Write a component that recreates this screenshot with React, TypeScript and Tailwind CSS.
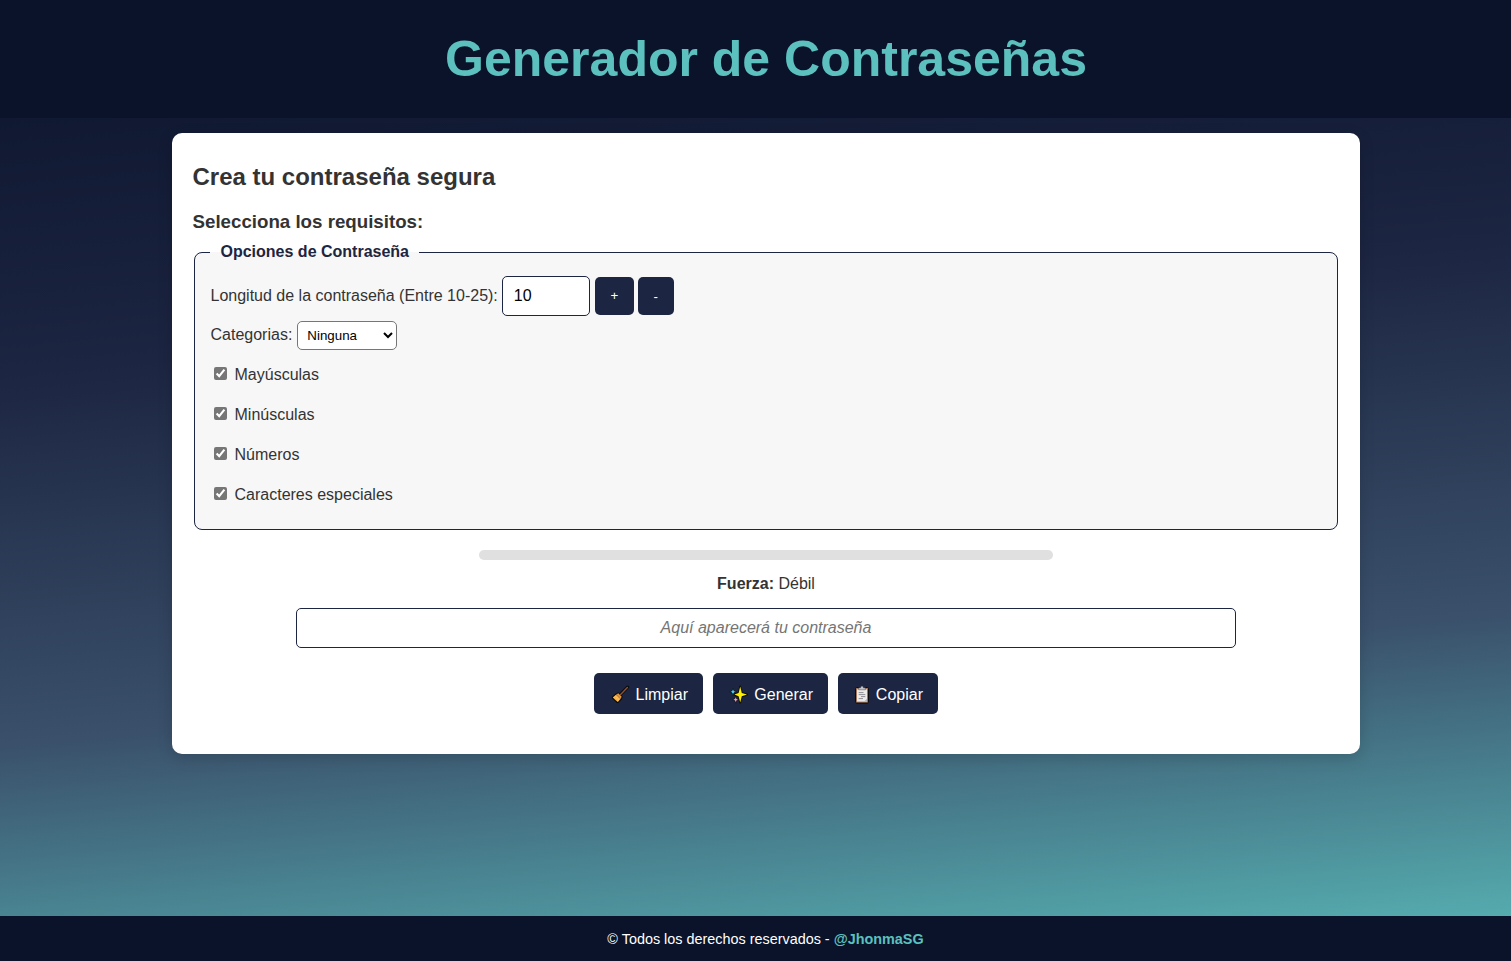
import { useState } from 'react';
import type { ReactNode } from 'react';

const options = ['Mayúsculas', 'Minúsculas', 'Números', 'Caracteres especiales'];

function BroomIcon() {
  return (
    <svg width="20" height="20" viewBox="0 0 20 20" className="mt-[2px] ml-[2px] shrink-0">
      <path d="M9.4 9.4 16.6 2.1" stroke="#0b0b0f" strokeWidth="3.2" strokeLinecap="round" />
      <path d="M7.4 7.8 11.2 11.4 10.2 14.6 7.2 17.6 6 17.6 1.2 13 1.4 12 4 9.4Z" fill="#0b0b0f" stroke="#0b0b0f" strokeLinejoin="round" />
      <path d="M9.6 9.4 16.4 2.4" stroke="#8c5336" strokeWidth="1.4" strokeLinecap="round" />
      <path d="M7.3 8.3 10.7 11.7 9.4 14 5 9.7Z" fill="#e09a40" />
      <path d="M5 9.7 9.4 14 6.8 17 1.8 12.4Z" fill="#ffbf55" />
      <path d="M5.8 9.6 9.6 13.2" stroke="#b87333" strokeWidth=".8" />
      <path d="M5.5 12 3.4 13.8M7 13.4 5.2 15.4" stroke="#dd9535" strokeWidth=".6" />
    </svg>
  );
}

function SparklesIcon() {
  return (
    <svg width="20" height="20" viewBox="0 0 20 20" className="mt-[2px] ml-px shrink-0" strokeLinejoin="round">
      <path d="M11.2 1.4 12.8 7.8 18.2 9.6 12.8 11.4 11.2 17.8 9.6 11.4 5 9.6 9.6 7.8Z" fill="#0b0b0f" stroke="#0b0b0f" strokeWidth="1.6" />
      <path d="M11.2 1.6 12.8 8 18 9.6 12.8 11.2 11.2 17.4 9.6 11.2 5.4 9.6 9.6 8Z" fill="#fff000" />
      <path d="M4 3.2 5 5.8 7.6 6.8 5 7.8 4 10.4 3 7.8.8 6.8 3 5.8Z" fill="#48cdf2" stroke="#0b0b0f" strokeWidth=".7" />
      <path d="M6.7 11.4 7.7 13.8 10 14.7 7.7 15.6 6.7 18.2 5.7 15.6 3.6 14.7 5.7 13.8Z" fill="#fa9ac0" stroke="#0b0b0f" strokeWidth=".7" />
    </svg>
  );
}

function ClipboardIcon() {
  return (
    <svg width="16" height="20" viewBox="0 0 16 20" className="mt-[2px] ml-px shrink-0">
      <rect x="1.5" y="2.5" width="13" height="15.6" rx="1.2" fill="#a3765b" stroke="#0b0b0f" />
      <path d="M3 4.3H13V16.6H3Z" fill="#eceae9" />
      <path d="M10.2 16.6 13 13.8V16.6Z" fill="#b4b5ba" />
      <path d="M4.6 4.8V2.8H6.5Q6.7 1 8 1T9.5 2.8H11.4V4.8Z" fill="#c4c6cb" stroke="#33333b" strokeWidth=".4" />
      <path d="M4.7 7.6H9.5M4.7 9.6H11.3M7 11.6H11.3M4.7 13.6H9" stroke="#82848c" strokeWidth=".9" />
    </svg>
  );
}

function ActionButton({ icon, label, className }: { icon: ReactNode; label: string; className: string }) {
  return (
    <button className={`flex h-[41px] items-center justify-between rounded-[5px] bg-[#1c2541] pr-[14.5px] pl-[15px] text-base text-white ${className}`}>
      {icon}
      <span className="pt-[2px]">{label}</span>
    </button>
  );
}

export default function App() {
  const [length, setLength] = useState(10);

  return (
    <div className="h-[961px] w-full overflow-hidden bg-[linear-gradient(175deg,#0b132b,#1c2541,#3a506b,#5bc0be)] bg-[length:100%_985px] font-['Liberation_Sans',Arial,sans-serif] text-base text-[#333]">
      <div className="flex h-full w-[1531px] flex-col items-center">
        <header className="flex h-[118px] w-full shrink-0 items-center justify-center bg-[#0b132b] pl-px">
          <h1 className="text-[50px] leading-[58px] font-bold text-[#5bc0be]">Generador de Contraseñas</h1>
        </header>

        <main className="mt-[15px] flex h-[621px] w-[1188px] shrink-0 flex-col rounded-[10px] bg-white px-5 pt-[30px] shadow-[0_4px_15px_rgba(0,0,0,0.15)]">
          <h2 className="pl-px text-2xl leading-[28px] font-bold">Crea tu contraseña segura</h2>
          <h3 className="mt-[20px] pl-px text-[18.72px] leading-[22px] font-bold">Selecciona los requisitos:</h3>

          <fieldset className="mx-[2px] mt-[9px] h-[288px] rounded-[8px] border border-[#1c2541] bg-[#f7f7f7] pr-[15px] pl-[16px]">
            <legend className="-ml-px h-[20px] pr-[10px] pl-[11px] leading-[20px] font-bold text-[#1c2541]">Opciones de Contraseña</legend>
            <div className="mt-[14px] flex h-[40px] items-center">
              <label htmlFor="length">Longitud de la contraseña (Entre 10-25):</label>
              <input
                id="length"
                type="text"
                readOnly
                value={length}
                className="ml-[4px] h-[40px] w-[88px] rounded-[5px] border border-[#1c2541] bg-white px-[11px] text-black"
              />
              <button
                onClick={() => setLength(Math.min(25, length + 1))}
                className="ml-[5px] h-[38px] w-[39px] rounded-[5px] bg-[#1c2541] text-[13.333px] text-white"
              >
                +
              </button>
              <button
                onClick={() => setLength(Math.max(10, length - 1))}
                className="ml-1 h-[38px] w-[36px] rounded-[5px] bg-[#1c2541] pt-px text-[13.333px] text-white"
              >
                -
              </button>
            </div>
            <div className="mt-[5px] flex h-[29px] items-center">
              <label htmlFor="category" className="pb-[2px]">Categorias:</label>
              <select
                id="category"
                className="ml-[5px] h-[29px] w-[100px] rounded-[5px] border border-[#767676] bg-white px-[5px] text-[13.333px] text-black"
              >
                <option>Ninguna</option>
              </select>
            </div>
            <div className="mt-[5px] flex flex-col">
              {options.map((option) => (
                <label key={option} className="flex h-10 items-center">
                  <input type="checkbox" defaultChecked className="mt-[-3px] mr-[8px] ml-[3px] size-[13px] accent-[#767676]" />
                  {option}
                </label>
              ))}
            </div>
          </fieldset>

          <div className="mt-[20px] h-[10px] w-1/2 self-center rounded-[5px] bg-[#e0e0e0]" />
          <p className="mt-[14px] self-center pl-px leading-[20px]">
            <strong>Fuerza:</strong> Débil
          </p>
          <input
            type="text"
            readOnly
            placeholder="Aquí aparecerá tu contraseña"
            className="mt-[14px] h-[40px] w-[940px] shrink-0 self-center rounded-[5px] border border-[#1c2541] bg-white pl-px text-center italic placeholder:text-[#757575]"
          />
          <div className="mt-[25px] flex justify-center gap-[10px]">
            <ActionButton icon={<BroomIcon />} label="Limpiar" className="w-[109px]" />
            <ActionButton icon={<SparklesIcon />} label="Generar" className="w-[115px]" />
            <ActionButton icon={<ClipboardIcon />} label="Copiar" className="w-[100px]" />
          </div>
        </main>

        <footer className="mt-auto flex h-[45px] w-full shrink-0 items-center justify-center bg-[#0b132b] pt-[2px] text-[14.4px] text-white">
          <p>
            © Todos los derechos reservados - <a className="font-bold text-[#5bc0be]">@JhonmaSG</a>
          </p>
        </footer>
      </div>
    </div>
  );
}
